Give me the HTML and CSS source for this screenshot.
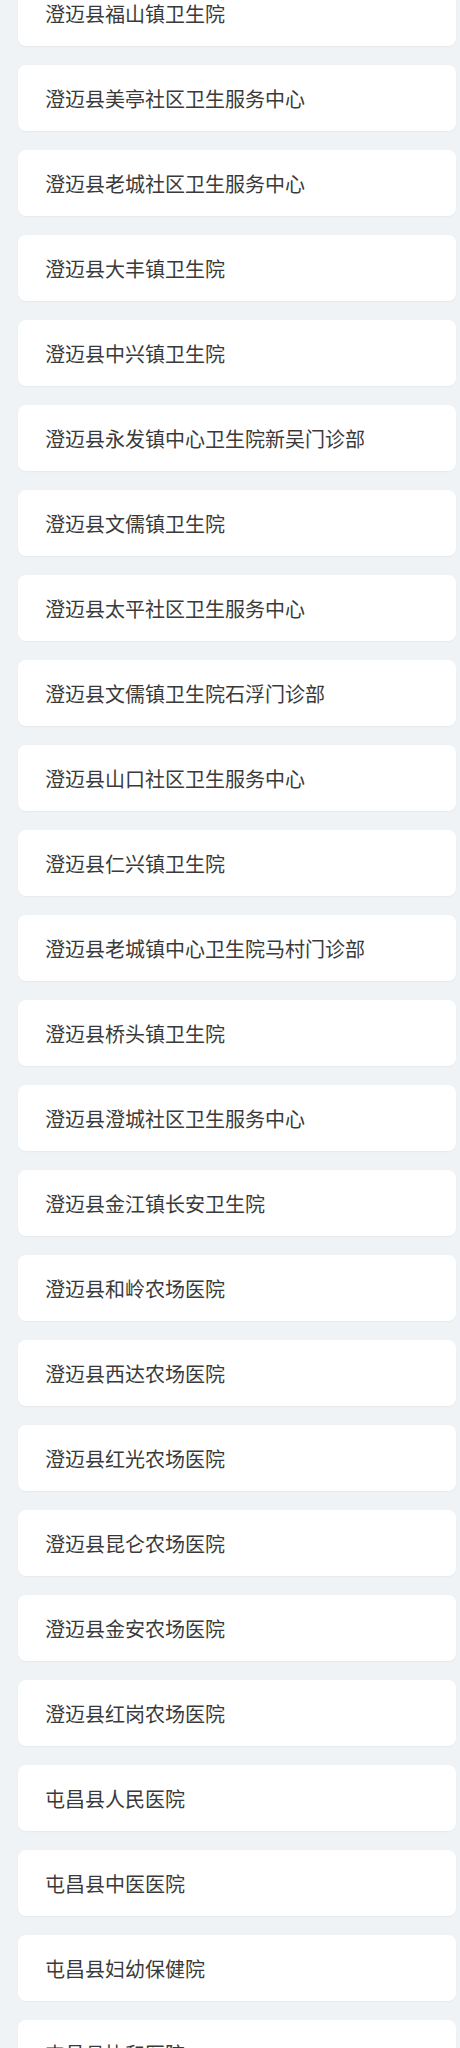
FILE: index.html
```html
<!DOCTYPE html>
<html lang="zh-CN">
<head>
<meta charset="utf-8">
<title>医院列表</title>
<link rel="stylesheet" href="styles.css">
</head>
<body>
<ul class="list">
  <li class="card">澄迈县福山镇卫生院</li>
  <li class="card">澄迈县美亭社区卫生服务中心</li>
  <li class="card">澄迈县老城社区卫生服务中心</li>
  <li class="card">澄迈县大丰镇卫生院</li>
  <li class="card">澄迈县中兴镇卫生院</li>
  <li class="card">澄迈县永发镇中心卫生院新吴门诊部</li>
  <li class="card">澄迈县文儒镇卫生院</li>
  <li class="card">澄迈县太平社区卫生服务中心</li>
  <li class="card">澄迈县文儒镇卫生院石浮门诊部</li>
  <li class="card">澄迈县山口社区卫生服务中心</li>
  <li class="card">澄迈县仁兴镇卫生院</li>
  <li class="card">澄迈县老城镇中心卫生院马村门诊部</li>
  <li class="card">澄迈县桥头镇卫生院</li>
  <li class="card">澄迈县澄城社区卫生服务中心</li>
  <li class="card">澄迈县金江镇长安卫生院</li>
  <li class="card">澄迈县和岭农场医院</li>
  <li class="card">澄迈县西达农场医院</li>
  <li class="card">澄迈县红光农场医院</li>
  <li class="card">澄迈县昆仑农场医院</li>
  <li class="card">澄迈县金安农场医院</li>
  <li class="card">澄迈县红岗农场医院</li>
  <li class="card">屯昌县人民医院</li>
  <li class="card">屯昌县中医医院</li>
  <li class="card">屯昌县妇幼保健院</li>
  <li class="card">屯昌县协和医院</li>
</ul>
</body>
</html>
```

FILE: styles.css
```css
html, body {
  margin: 0;
  padding: 0;
  background: #eff3f6;
  overflow: hidden;
}
body {
  font-family: "Noto Sans CJK SC", "Noto Sans", sans-serif;
  color: #3a3a3a;
}
.list {
  list-style: none;
  margin: -20px 4px 0 18px;
  padding: 0;
  display: flex;
  flex-direction: column;
  gap: 19px;
}
.card {
  height: 66px;
  box-sizing: border-box;
  padding: 2px 0 0 27px;
  display: flex;
  align-items: center;
  background: #ffffff;
  border-radius: 8px;
  box-shadow: 0 1px 2px rgba(0, 0, 0, 0.04);
  font-size: 20px;
  line-height: 28px;
}
```
